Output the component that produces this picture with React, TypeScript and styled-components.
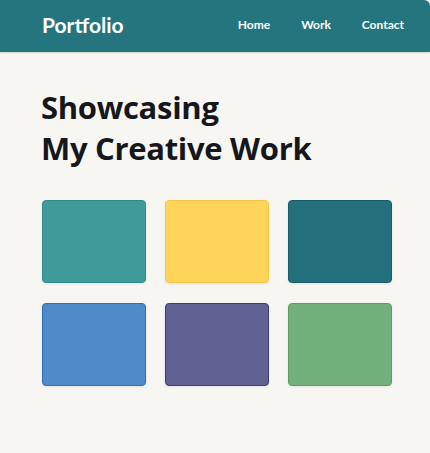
import React from "react";
import styled, { createGlobalStyle } from "styled-components";

const Global = createGlobalStyle`
  html, body { margin: 0; padding: 0; background: #f8f6f2; }
  body { font-family: Lato, "Open Sans", sans-serif; }
`;

const Page = styled.div`
  width: 430px;
  height: 453px;
  background: #f8f6f2;
  overflow: hidden;
`;

const Header = styled.header`
  height: 52px;
  background: #24757d;
  display: flex;
  align-items: center;
  padding: 0 26px 0 42px;
  box-sizing: border-box;
  border-top-right-radius: 6px;
  box-shadow: 0 1px 2px rgba(0,0,0,0.15);
`;

const Logo = styled.div`
  color: #fff;
  font-weight: 700;
  font-size: 21px;
  flex: 1;
  margin-top: -4px;
`;

const Nav = styled.nav`
  display: flex;
  gap: 31px;
  margin-top: -3px;
`;

const NavLink = styled.a`
  color: #fff;
  font-weight: 700;
  font-size: 12px;
  text-decoration: none;
`;

const Main = styled.main`
  padding: 35px 37px 0 41px;
`;

const Title = styled.h1`
  margin: 0;
  font-family: "Open Sans", Lato, sans-serif;
  font-size: 31px;
  line-height: 41px;
  font-weight: 700;
  letter-spacing: -0.3px;
  color: #15171c;
`;

const Grid = styled.div`
  margin-top: 31px;
  margin-left: 1px;
  display: grid;
  grid-template-columns: repeat(3, 104px);
  grid-auto-rows: 83px;
  column-gap: 19px;
  row-gap: 20px;
`;

const Card = styled.div<{ $bg: string; $border: string }>`
  background: ${(p) => p.$bg};
  border: 1px solid ${(p) => p.$border};
  border-radius: 4px;
  box-shadow: 0 1px 3px rgba(0,0,0,0.08);
`;

const cards = [
  { bg: "#419a9a", border: "#2f8a8a" },
  { bg: "#fed45a", border: "#f6c744" },
  { bg: "#24717d", border: "#1a5e6b" },
  { bg: "#4e8bc8", border: "#2f6fb8" },
  { bg: "#616293", border: "#3d3d78" },
  { bg: "#72b07c", border: "#5a9e66" },
];

export default function App() {
  return (
    <Page>
      <Global />
      <Header>
        <Logo>Portfolio</Logo>
        <Nav>
          <NavLink>Home</NavLink>
          <NavLink>Work</NavLink>
          <NavLink>Contact</NavLink>
        </Nav>
      </Header>
      <Main>
        <Title>
          Showcasing
          <br />
          My Creative Work
        </Title>
        <Grid>
          {cards.map((c, i) => (
            <Card key={i} $bg={c.bg} $border={c.border} />
          ))}
        </Grid>
      </Main>
    </Page>
  );
}
